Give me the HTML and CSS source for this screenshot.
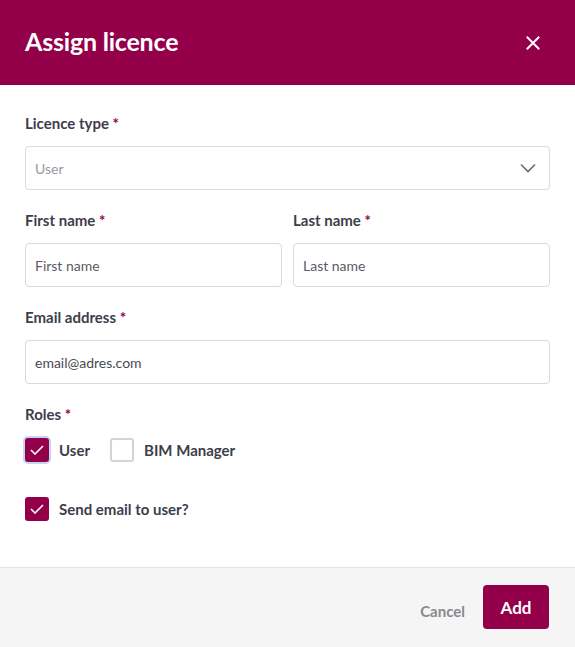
FILE: index.html
```html
<!DOCTYPE html>
<html lang="en">
<head>
<meta charset="utf-8">
<title>Assign licence</title>
<link rel="stylesheet" href="styles.css">
</head>
<body>
<div class="modal">
  <header class="modal-header">
    <h1 class="modal-title">Assign licence</h1>
    <button class="close-btn" aria-label="Close">
      <svg width="14" height="14" viewBox="0 0 14 14"><path d="M1.5 1.5 L12.5 12.5 M12.5 1.5 L1.5 12.5" stroke="#fff" stroke-width="2" stroke-linecap="square" fill="none"/></svg>
    </button>
  </header>
  <div class="modal-body">
    <div class="field">
      <label class="label">Licence type <span class="req">*</span></label>
      <div class="select">
        <span class="select-value">User</span>
        <svg class="chevron" width="16" height="10" viewBox="0 0 16 10"><path d="M1 1.5 L8 8.5 L15 1.5" stroke="#6b6b74" stroke-width="1.6" fill="none"/></svg>
      </div>
    </div>
    <div class="row">
      <div class="field">
        <label class="label">First name <span class="req">*</span></label>
        <div class="input placeholder">First name</div>
      </div>
      <div class="field">
        <label class="label">Last name <span class="req">*</span></label>
        <div class="input placeholder">Last name</div>
      </div>
    </div>
    <div class="field">
      <label class="label">Email address <span class="req">*</span></label>
      <div class="input value">email@adres.com</div>
    </div>
    <div class="field roles">
      <label class="label">Roles <span class="req">*</span></label>
      <div class="check-row">
        <label class="check">
          <span class="box checked focused">
            <svg width="14" height="10" viewBox="0 0 14 10"><path d="M1 5 L5 9 L13 1" stroke="#fff" stroke-width="1.6" fill="none"/></svg>
          </span>
          <span class="check-text">User</span>
        </label>
        <label class="check">
          <span class="box"></span>
          <span class="check-text">BIM Manager</span>
        </label>
      </div>
    </div>
    <label class="check send">
      <span class="box checked">
        <svg width="14" height="10" viewBox="0 0 14 10"><path d="M1 5 L5 9 L13 1" stroke="#fff" stroke-width="1.6" fill="none"/></svg>
      </span>
      <span class="check-text">Send email to user?</span>
    </label>
  </div>
  <footer class="modal-footer">
    <button class="btn-cancel">Cancel</button>
    <button class="btn-add">Add</button>
  </footer>
</div>
</body>
</html>
```
FILE: styles.css
```css
* { box-sizing: border-box; }
html, body { margin: 0; padding: 0; background: #fff; }
body {
  font-family: "Lato", "Open Sans", sans-serif;
  color: #3d3d4b;
  width: 575px;
  height: 647px;
  overflow: hidden;
}
.modal { display: flex; flex-direction: column; height: 647px; }
.modal-header {
  height: 85px;
  flex: none;
  background: #930049;
  display: flex;
  align-items: center;
  justify-content: space-between;
  padding: 0 35px 4px 25px;
}
.modal-title {
  margin: 0;
  color: #fff;
  font-size: 25px;
  font-weight: 700;
  letter-spacing: -0.2px;
}
.close-btn {
  background: none; border: 0; padding: 0; width: 14px; height: 14px;
  display: flex; align-items: center; justify-content: center;
  margin-top: 4px;
}
.modal-body {
  flex: 1;
  padding: 28px 25px 0 25px;
  display: flex;
  flex-direction: column;
}
.field { display: flex; flex-direction: column; margin-bottom: 20px; }
.label {
  font-size: 15px;
  line-height: 20px;
  font-weight: 700;
  color: #3d3d4b;
  margin-bottom: 13px;
}
.req { color: #930049; }
.select, .input {
  height: 44px;
  border: 1px solid #dadade;
  border-radius: 4px;
  display: flex;
  align-items: center;
  padding: 0 9px;
  font-size: 14px;
}
.select { justify-content: space-between; padding-right: 13px; }
.select-value { color: #9a9aa2; }
.placeholder { color: #5c5c68; }
.value { color: #4a4a55; }
.row { display: flex; gap: 11px; }
.row .field { flex: 1; }
.roles { margin-bottom: 0; }
.roles .label { margin-bottom: 13px; }
.check-row { display: flex; gap: 20px; align-items: center; }
.check { display: flex; align-items: center; gap: 10px; font-size: 15px; font-weight: 700; color: #3d3d4b; }
.box {
  width: 24px; height: 24px;
  flex: none;
  border: 2px solid #d3d3d8;
  border-radius: 3px;
  background: #fff;
  display: flex; align-items: center; justify-content: center;
}
.box.checked { background: #930049; border-color: #930049; }
.box.focused { box-shadow: 0 0 0 2px #c5d5f5; }
.check-row .check { height: 26px; }
.send { margin-top: 34px; }
.modal-footer {
  height: 80px;
  flex: none;
  background: #f5f5f5;
  border-top: 1px solid #e2e2e2;
  display: flex;
  justify-content: flex-end;
  align-items: flex-start;
  padding: 17px 26px 0 0;
  gap: 18px;
}
.btn-cancel {
  background: none; border: 0; padding: 0;
  height: 44px;
  font-family: inherit;
  font-size: 15px;
  font-weight: 700;
  color: #8a8a8e;
  margin-top: 4px;
}
.btn-add {
  width: 66px; height: 44px;
  background: #930049;
  color: #fff;
  border: 0;
  border-radius: 4px;
  font-family: inherit;
  font-size: 17px;
  font-weight: 700;
}
```
